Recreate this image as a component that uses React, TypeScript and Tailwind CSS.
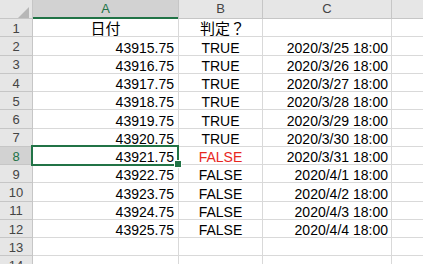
import React from "react";

const FONT = '"Liberation Sans", "Noto Sans CJK JP", Arial, sans-serif';

type Row = { n: number; a: string; b: string; c: string; red?: boolean; center?: boolean };

const dates = [
  "2020/3/25 18:00",
  "2020/3/26 18:00",
  "2020/3/27 18:00",
  "2020/3/28 18:00",
  "2020/3/29 18:00",
  "2020/3/30 18:00",
  "2020/3/31 18:00",
  "2020/4/1 18:00",
  "2020/4/2 18:00",
  "2020/4/3 18:00",
  "2020/4/4 18:00",
];

const rows: Row[] = [
  { n: 1, a: "日付", b: "判定？", c: "", center: true },
  ...dates.map((d, i) => ({
    n: i + 2,
    a: (43915.75 + i).toFixed(2),
    b: i + 2 <= 7 ? "TRUE" : "FALSE",
    c: d,
    red: i + 2 === 8,
  })),
  { n: 13, a: "", b: "", c: "" },
  { n: 14, a: "", b: "", c: "" },
];

export default function App() {
  return (
    <div
      className="relative w-[423px] h-[264px] overflow-hidden bg-white text-black"
      style={{ fontFamily: FONT }}
    >
      {/* column header row */}
      <div className="flex h-[19px] bg-[#e6e6e6] border-b border-[#c6c6c6] text-[13px] text-[#444]">
        <div className="relative w-[33px] shrink-0 border-r border-[#c6c6c6]">
          <svg className="absolute left-[18px] top-[7px]" width="11" height="11" viewBox="0 0 11 11">
            <polygon points="11,0 11,11 0,11" fill="#b7b7b7" />
          </svg>
        </div>
        <div className="relative w-[146px] shrink-0 border-r border-[#c6c6c6] bg-[#d2d2d2] flex items-center justify-center text-[#217346]">
          A
          <div className="absolute left-0 right-0 bottom-[-1px] h-[2px] bg-[#217346]" />
        </div>
        <div className="w-[84px] shrink-0 border-r border-[#c6c6c6] flex items-center justify-center">B</div>
        <div className="w-[129px] shrink-0 border-r border-[#c6c6c6] flex items-center justify-center">C</div>
        <div className="flex-1" />
      </div>

      {rows.map((r) => {
        const sel = r.n === 8;
        return (
          <div key={r.n} className="flex h-[18.25px]">
            <div
              className={
                "w-[33px] shrink-0 border-r border-b border-[#c6c6c6] flex items-center justify-center text-[13px] pt-[2px] " +
                (sel ? "bg-[#d2d2d2] text-[#217346]" : "bg-[#e6e6e6] text-[#444]")
              }
            >
              {r.n}
            </div>
            <div
              className={
                "w-[146px] shrink-0 border-r border-b border-[#d9d9d9] flex items-end leading-[14px] " +
                (r.center ? "justify-center text-[15px]" : "justify-end pr-[4px] text-[14px]")
              }
            >
              {r.a}
            </div>
            <div
              className={
                "w-[84px] shrink-0 border-r border-b border-[#d9d9d9] flex items-end leading-[14px] " +
                (r.center ? "justify-center text-[15px] pl-[4px]" : "justify-center text-[14px]") +
                (r.red ? " text-[#e8271f]" : "")
              }
            >
              {r.b}
            </div>
            <div className="w-[129px] shrink-0 border-r border-b border-[#d9d9d9] flex items-end justify-end pr-[3px] text-[14px] leading-[14px]">
              {r.c}
            </div>
            <div className="flex-1 border-b border-[#d9d9d9]" />
          </div>
        );
      })}

      {/* selection box */}
      <div className="absolute left-[31px] top-[145px] w-[148px] h-[21px] border-2 border-[#217346]" />
      <div className="absolute left-[174px] top-[160px] w-[6px] h-[6px] bg-[#217346] border border-white box-content" />
    </div>
  );
}
